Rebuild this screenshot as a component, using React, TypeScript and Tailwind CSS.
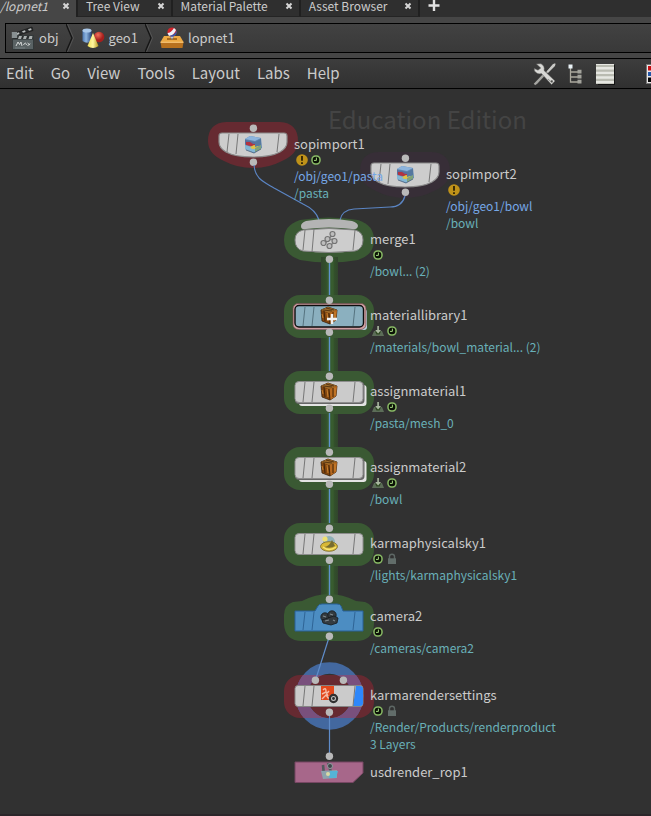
import React from "react";

type Badge = "warn" | "clock" | "import" | "lock";

/* ---------- toolbar and breadcrumb icons ---------- */

function CloseGlyph() {
  return (
    <svg viewBox="0 0 8 8" className="h-2 w-2" aria-hidden="true">
      <path d="M1.5 1.5 L6.5 6.5 M6.5 1.5 L1.5 6.5" stroke="#d6d6d6" strokeWidth="2" />
    </svg>
  );
}

function ClapperIcon() {
  return (
    <svg viewBox="0 0 24 24" className="h-6 w-6" aria-hidden="true">
      <path d="M1 8 L21 1 L22 4.5 L2 11 Z" fill="#2a2c2d" stroke="#141414" strokeWidth=".6" />
      <path d="M5 7.4 L8 6.3 L8.5 8 L6 9 Z M11 5.2 L14 4.2 L14.6 6 L12 6.8 Z M17 3.2 L20 2.2 L20.6 4 L18 4.8 Z" fill="#b9bdbd" />
      <rect x="1.5" y="9.5" width="21" height="14" fill="#596264" stroke="#33393a" />
      <rect x="2" y="10" width="20" height="3.5" fill="#2b2e2f" />
      <path d="M8 10 H11 L10 13 H7 Z M13 10 H16 L15 13 H12 Z M18.5 10 H21.5 L21 13 H17.5 Z" fill="#a9aeae" />
      <rect x="0.8" y="6" width="5.4" height="6" fill="#889092" />
      <path d="M5 20 L7 16 L8.5 18.5 L10 16 L11 20 M12.5 19 Q14.5 15 15.5 19 M16.5 17 L19 19 M16.5 20 L19 17.5" stroke="#d4d8d8" strokeWidth="1" fill="none" />
      <path d="M4 22 H14" stroke="#7f898b" strokeWidth=".8" />
    </svg>
  );
}

function GeoIcon() {
  return (
    <svg viewBox="0 0 24 22" className="h-[22px] w-6" aria-hidden="true">
      <defs>
        <linearGradient id="geoCyl">
          <stop offset="0" stopColor="#4d77b0" />
          <stop offset=".4" stopColor="#8db5e0" />
          <stop offset="1" stopColor="#27477d" />
        </linearGradient>
        <radialGradient id="geoBall" cx=".4" cy=".3">
          <stop offset="0" stopColor="#f2705a" />
          <stop offset="1" stopColor="#a51f1d" />
        </radialGradient>
        <linearGradient id="geoCone">
          <stop offset="0" stopColor="#f1df55" />
          <stop offset=".5" stopColor="#fff6a0" />
          <stop offset="1" stopColor="#b6951a" />
        </linearGradient>
      </defs>
      <path d="M1.5 3.5 V14 Q6 17.5 10.5 14 V3.5 Z" fill="url(#geoCyl)" />
      <ellipse cx="6" cy="3.5" rx="4.5" ry="2" fill="#a9c8ea" />
      <circle cx="18" cy="10" r="5.3" fill="url(#geoBall)" />
      <path d="M12 6 L17.5 19 Q12 23 6.5 19 Z" fill="url(#geoCone)" />
    </svg>
  );
}

function LopIcon() {
  return (
    <svg viewBox="0 0 24 22" className="h-[22px] w-6" aria-hidden="true">
      <path d="M4 9 H20 L23.5 15 H0.5 Z" fill="#eda944" />
      <path d="M0.5 15 H23.5 L22.5 21 H1.5 Z" fill="#b8711e" />
      <path d="M0.5 15.3 H23.5" stroke="#ffd182" strokeWidth="1" />
      <path d="M7 12 H17" stroke="#a86a1e" strokeWidth="2" />
      <path d="M9.5 8 L12 12.5 L14.5 8" fill="#d8e0ee" stroke="#6e7688" strokeWidth=".6" />
      <circle cx="12" cy="5" r="4.6" fill="#d2242a" />
      <path d="M7.5 6 Q11 6 14 1 L16 3 Q14 8.5 9 9 Z" fill="#edf2fb" />
      <path d="M9 9 Q15 8 16.5 3.5 Q17.5 9 12 9.8 Z" fill="#3158ad" />
    </svg>
  );
}

function ToolsIcon() {
  return (
    <svg viewBox="0 0 24 24" className="h-6 w-6" aria-hidden="true">
      <path d="M22 1.8 L12 12.5 L3 22" stroke="#8f8f8b" strokeWidth="1.6" />
      <path d="M22.5 1.5 L20 2 L13.5 9.5 L15 11 L22 4 Z" fill="#c9c9c6" />
      <path d="M11.5 12 L1.5 22.5" stroke="#a6a6a2" strokeWidth="2" />
      <path d="M3.5 2 L8 1.8 Q12 4 11 8.5 L22 19 L18.5 22.5 L8.5 11.5 Q4.5 13 1.5 9 L1.3 6.5 L5 8.2 L7.8 6 Z" fill="#d8d8d5" stroke="#6f6f6c" strokeWidth=".5" />
      <path d="M15 17 L20 21.5" stroke="#92928e" strokeWidth="1" />
      <circle cx="18.8" cy="19.3" r="1.1" fill="#4b4b49" />
    </svg>
  );
}

function TreeIcon() {
  return (
    <svg viewBox="0 0 16 20" className="h-5 w-4" aria-hidden="true">
      <path d="M3.5 4 V18 H11 M3.5 8 H11 M3.5 13 H11" stroke="#aaa89d" strokeWidth="1.3" fill="none" />
      <rect x="1.5" y="0.5" width="4" height="4" fill="#e9f2f6" />
      <path d="M10.5 5.8 h4 v3.8 h-4 Z M10.5 10.8 h4 v3.8 h-4 Z M10.5 15.8 h4 v3.8 h-4 Z" fill="#a3a39c" />
    </svg>
  );
}

function ListIcon() {
  return (
    <svg viewBox="0 0 20 22" className="h-[22px] w-5" aria-hidden="true">
      <path d="M3 2 H20 V22 H3 Z" fill="#151515" />
      <rect x="1" y="1" width="18" height="20" fill="#e6e7e2" />
      <path d="M1 3 H19 M1 7.6 H19 M1 12.2 H19 M1 16.8 H19" stroke="#b9bbb1" strokeWidth="2.2" />
      <path d="M1 20.5 H19" stroke="#c6c7bf" strokeWidth="1" />
    </svg>
  );
}

function PaletteIcon() {
  return (
    <svg viewBox="0 0 20 20" className="h-5 w-5 shrink-0" aria-hidden="true">
      <rect x="0.5" y="0.5" width="19" height="19" fill="#e8e8e8" stroke="#777" />
      <rect x="2" y="2" width="7" height="4.5" fill="#c40d12" />
      <rect x="2" y="8" width="7" height="4" fill="#2457a8" />
      <rect x="2" y="13.5" width="7" height="4.5" fill="#050505" />
      <rect x="11" y="2" width="7" height="16" fill="#999" />
    </svg>
  );
}

/* ---------- badges below a node's name ---------- */

function BadgeIcon({ kind }: { kind: Badge }) {
  return (
    <svg viewBox="0 0 14 14" className="h-3.5 w-3.5" aria-hidden="true">
      {kind === "warn" && (
        <>
          <circle cx="7" cy="7" r="5.8" fill="#bf9219" />
          <path d="M7 3 V7.8 M7 9.2 V11" stroke="#352805" strokeWidth="1.9" />
        </>
      )}
      {kind === "clock" && (
        <>
          <rect x="3" y="3" width="8" height="8" rx="3.4" fill="#0b1206" stroke="#8abb66" strokeWidth="1.5" />
          <path d="M7.4 4.6 V7.4 H5" stroke="#a5d880" strokeWidth="1" fill="none" />
        </>
      )}
      {kind === "import" && (
        <>
          <path d="M3 7 H11 L13 12 H1 Z" fill="#5c6d58" />
          <path d="M4 7.5 H10 L8.5 10.5 H5.5 Z" fill="#2f4a22" />
          <path d="M6.3 2 H7.9 V6 H10 L7.1 9.4 L4.2 6 H6.3 Z" fill="#a9b8a0" />
        </>
      )}
      {kind === "lock" && (
        <>
          <path d="M4.5 7 V4.5 Q4.5 2.3 7 2.3 Q9.5 2.3 9.5 4.5 V7" stroke="#5d6764" strokeWidth="1.4" fill="none" />
          <rect x="3" y="6.3" width="8" height="5.7" fill="#626d6a" />
        </>
      )}
    </svg>
  );
}

/* ---------- node artwork, drawn round the node's centre ---------- */

function At({ x, y, children }: { x: number; y: number; children: React.ReactNode }) {
  return <g transform={`translate(${x} ${y})`}>{children}</g>;
}

function Dot({ x = 0, y }: { x?: number; y: number }) {
  return <circle cx={x + 0.4} cy={y + 0.2} r="3.7" fill="#b9b9b9" />;
}

function Slashes({ color = "#777" }: { color?: string }) {
  return <path d="M-24 -10 L-26 10 M-15 -10 L-17 10 M26 -10 L24 10" stroke={color} strokeWidth="1" />;
}

function SopNode({ halo }: { halo: string }) {
  return (
    <>
      <path d="M-27 -22 H27 Q45 -21 45 -3 Q45 10 29 17 Q16 24 0 24 Q-16 24 -29 17 Q-45 10 -45 -3 Q-45 -21 -27 -22 Z" fill={halo} />
      <path d="M-31 -11 H31 Q34 -11 34 -8 V-2 Q34 4 27 8 Q18 13 0 13 Q-18 13 -27 8 Q-34 4 -34 -2 V-8 Q-34 -11 -31 -11 Z" fill="#cdcdcd" stroke="#8b8b8b" strokeWidth="1.2" />
      <path d="M-24 -10 L-26 8 M-15 -10 L-17 10 M26 -10 L24 8" stroke="#777" />
      <path d="M-8 -5 L-3 -8 L8 -6 L9 4 L1 9 L-8 5 Z" fill="#5f86ae" />
      <path d="M-8 -5 L-3 -8 L8 -6 L2 -3 Z" fill="#8db4dd" />
      <path d="M-8 -4 L2 -2 V2 L-8 0 Z" fill="#5a6f9c" />
      <path d="M-7 -2 L-3 -2 L0 0 L2 0 V3 L-7 1 Z" fill="#b33340" />
      <path d="M-8 1 L2 4 V9 L-8 5 Z" fill="#83b6d4" />
      <path d="M-3 3 L1 1 L6 2 L4 5 L-1 5 Z" fill="#dcc34a" />
      <path d="M2 -2 L8 -5 V1 L2 3 Z" fill="#55789f" />
      <path d="M2 4 L8 1 V5 L2 8 Z" fill="#7fa37c" />
      <path d="M-7 6 L1 9 L8 5" stroke="#46617f" fill="none" strokeWidth=".8" />
      <Dot y={-16} />
      <Dot y={18} />
    </>
  );
}

function GreenHalo() {
  return <rect x="-45" y="-21" width="90" height="43" rx="16" fill="#3a5933" />;
}

function WoodCube() {
  return (
    <>
      <path d="M-8 -6 L-1 -9 L8 -6 L7 4 L1 8 L-7 5 Z" fill="#84470f" stroke="#3a230e" strokeWidth=".8" />
      <path d="M-8 -6 L-1 -9 L8 -6 L0 -3 Z" fill="#a06c2a" />
      <path d="M0 -3 L8 -6 L7 4 L1 8 Z" fill="#b5681f" />
      <path d="M-5 -5 L-4 5 M0 -3 L1 8 M4 -4 V5" stroke="#3f240b" strokeWidth="1" />
      <path d="M-2 -3 L-1 5 M6 -4 V3 M-7 -2 L-6 2" stroke="#c98230" strokeWidth="1" />
      <path d="M-6 -6 L3 -5 M-3 -8 L5 -6" stroke="#46290e" strokeWidth=".8" />
    </>
  );
}

function AssignNode() {
  return (
    <>
      <GreenHalo />
      <rect x="-30" y="-7" width="67.5" height="21" rx="3" fill="#e4e4e4" />
      <rect x="-34" y="-10" width="69.5" height="22" rx="4" fill="#666" />
      <rect x="-34" y="-10.5" width="68" height="21" rx="4" fill="#cbcbcb" stroke="#8d8d8d" />
      <Slashes />
      <WoodCube />
      <Dot y={-16} />
      <Dot y={16} />
    </>
  );
}

function Graph() {
  return (
    <svg className="absolute inset-0 h-full w-full" role="img" aria-label="Node network">
      <defs>
        <linearGradient id="trail">
          <stop offset="0" stopColor="#31452c" />
          <stop offset=".3" stopColor="#324f2b" />
          <stop offset=".4" stopColor="#385c2f" />
          <stop offset=".7" stopColor="#385c2f" />
          <stop offset=".8" stopColor="#324f2b" />
          <stop offset="1" stopColor="#31452c" />
        </linearGradient>
        <clipPath id="flagHalo">
          <rect x="-45" y="-21" width="90" height="43" rx="16" />
        </clipPath>
      </defs>

      <At x={253} y={55}><SopNode halo="#662a31" /></At>
      <At x={405} y={85}><SopNode halo="#372e37" /></At>

      {/* green halos behind the cooked chain */}
      <path d="M300 131 Q329 126 358 131 Q374 136 374 151 Q374 166 358 171 Q329 176 300 171 Q284 166 284 151 Q284 136 300 131 Z" fill="#3a5933" />
      <rect x="321" y="168" width="17" height="345" fill="url(#trail)" />

      <path d="M254 76 C255 90 264 93 274 99 L303 115 Q316 121 319 131" fill="none" stroke="#5b85c4" strokeWidth="1.2" />
      <path d="M405 107 Q402 118 390 118 L354 120 Q342 121 340 131" fill="none" stroke="#5b85c4" strokeWidth="1.2" />

      <At x={329} y={151}>
        <path d="M-23 -19 Q0 -23 23 -19 Q29 -17 29 -14 Q28 -10 23 -11 Q0 -14 -23 -11 Q-28 -10 -28 -14 Q-28 -17 -23 -19 Z" fill="#b4b4b4" />
        <path d="M-26 -10 Q0 -13 26 -10 Q34 -8 34 0 Q34 9 26 11 Q0 14 -26 11 Q-34 9 -34 0 Q-34 -8 -26 -10 Z" fill="#cdcdcd" stroke="#838383" />
        <path d="M-24 -10 L-26 10 M-15 -11 L-17 12 M26 -10 L24 10" stroke="#777" />
        <path d="M-5 5 L3 -5 M0 7 L6 1 M-2 0 L5 -1" stroke="#858585" strokeWidth="1.5" />
        <path d="M-8 3 a2.5 2.5 0 1 0 5 0 a2.5 2.5 0 1 0 -5 0 M-2 6 a2.5 2.5 0 1 0 5 0 a2.5 2.5 0 1 0 -5 0 M-4 -1 a2.5 2.5 0 1 0 5 0 a2.5 2.5 0 1 0 -5 0 M1 -6 a2.5 2.5 0 1 0 5 0 a2.5 2.5 0 1 0 -5 0 M3 1 a2.5 2.5 0 1 0 5 0 a2.5 2.5 0 1 0 -5 0" fill="#bdbdbd" stroke="#747474" strokeWidth="1.2" />
        <Dot y={19} />
      </At>

      <At x={329} y={227}>
        <GreenHalo />
        <rect x="-31" y="-7" width="69" height="21" rx="3" fill="#b8d3df" />
        <rect x="-36" y="-12.5" width="73" height="26" rx="5" fill="#cf9fa1" stroke="#6d4a4c" strokeWidth=".7" />
        <rect x="-34" y="-10.5" width="68.5" height="21.5" rx="4" fill="#8bb0bf" stroke="#0e0e0e" strokeWidth="1.4" />
        <path d="M-24 -9 L-26 10 M-15 -9 L-17 10 M26 -9 L24 10" stroke="#55737f" />
        <WoodCube />
        <path d="M3 -2 V8 M-2 3 H8" stroke="#f1f1f1" strokeWidth="2.4" />
        <Dot y={-16} />
        <Dot y={16} />
      </At>

      <At x={329} y={303}><AssignNode /></At>
      <At x={329} y={379}><AssignNode /></At>

      <At x={329} y={455}>
        <GreenHalo />
        <rect x="-34" y="-10.5" width="68" height="21" rx="4" fill="#cbcbcb" stroke="#8d8d8d" />
        <Slashes />
        <ellipse cx="0" cy="-2" rx="6" ry="6" fill="#8fb0b6" />
        <circle cx="-4" cy="-5" r="2.6" fill="#efe072" />
        <ellipse cx="0" cy="2.5" rx="8.5" ry="4.8" fill="#d8b836" stroke="#817333" strokeWidth=".9" />
        <path d="M-5 3 Q0 3 3 -4 L6 2 Q2 5 -5 3 Z" fill="#776c30" />
        <path d="M-6 3 Q0 8 7 3" stroke="#f7e574" fill="none" strokeWidth="1.3" />
        <Dot y={-16} />
        <Dot y={16} />
      </At>

      <At x={329} y={531}>
        <path d="M-27 -19 Q0 -33 27 -19 L36 -18 Q45 -15 45 -5 V4 Q44 21 27 21 H-27 Q-44 21 -45 4 V-5 Q-45 -15 -36 -18 Z" fill="#3a5933" />
        <path d="M-34 -9 H-14 L-11 -14 Q-10 -16 -7 -16 H8 Q11 -16 12 -14 L14 -9 H34 V11 H-34 Z" fill="#4c8dc2" stroke="#286099" strokeLinejoin="round" />
        <path d="M-24 -8 L-26 10 M-15 -8 L-17 10 M26 -8 L24 10" stroke="#2e6496" />
        <g fill="#343b40" stroke="#171b1d" strokeWidth=".8">
          <circle cx="-4" cy="-3" r="4.2" />
          <circle cx="3" cy="-5" r="4.2" />
          <path d="M-7 0 L5 -4 L9 -2 L8 3 L2 5 L-6 3 Z" />
        </g>
        <path d="M-6 -4 L-3 -3 M1 -6 L4 -5 M-4 1 L0 0 M4 0 L6 1" stroke="#7f898e" strokeWidth="1.1" fill="none" />
      </At>

      {/* flagged render settings node */}
      <At x={329} y={607}>
        <rect x="-45" y="-21" width="90" height="43" rx="16" fill="#662a31" />
        <circle cx="0.5" cy="0" r="28" fill="none" stroke="#43689f" strokeWidth="11.5" />
        <circle cx="0.5" cy="0" r="28" fill="none" stroke="#79507d" strokeWidth="11.5" clipPath="url(#flagHalo)" />
        <path d="M0.5 -60 L-13.5 -16 M0.5 16 V60" stroke="#5f8cc9" strokeWidth="1.2" />
        <rect x="-34" y="-10.5" width="68" height="21" rx="3" fill="#cbcbcb" stroke="#858585" />
        <path d="M27 -10 H31 Q34 -10 34 -7 V7 Q34 10 31 10 H24 Z" fill="#2d87fa" />
        <Slashes />
        <rect x="-8" y="-10" width="13" height="14" fill="#e2481c" />
        <path d="M-6 -6 Q-3 -9 -3 -5 T0 -5 M-7 -2 L-3 -4 L-1 0 M-7 3 L-3 -1 L0 3" fill="none" stroke="#f6bba5" strokeWidth="1.4" />
        <circle cx="4.5" cy="2.5" r="3.6" fill="#c4c4c4" stroke="#303030" strokeWidth="2.2" />
        <circle cx="4.5" cy="2.5" r="1.4" fill="#303030" />
        <Dot x={-14} y={-16} />
        <Dot x={14} y={-16} />
        <Dot y={16} />
      </At>

      <At x={329} y={683}>
        <path d="M-34 -10 H34 V1 L24 10.5 H-34 Z" fill="#a7678a" stroke="#774763" />
        <path d="M-6 -7 L-5 3 M-1 -9 L2 0" stroke="#52595e" strokeWidth="2.6" />
        <circle cx="1" cy="-6" r="2.5" fill="#40474b" stroke="#929b9f" />
        <path d="M-8 -1 L8 -2 V6 L-6 7 Z" fill="#8da3ad" />
        <path d="M1 -1 H9 L7 6 H0 Z" fill="#55b4d7" />
        <circle cx="-1" cy="2" r="2" fill="#dadba5" />
        <Dot y={-16} />
      </At>

      {/* thin data wires of the chain */}
      <path d="M329.5 174 V206 M329.5 248 V282 M329.5 324 V358 M329.5 400 V434 M329.5 476 V506" stroke="#5f92cc" strokeWidth="1.4" />
      <Dot x={329} y={510} />
      <Dot x={329} y={547} />
    </svg>
  );
}

/* ---------- node names and their info lines ---------- */

const LABELS: { name: string; at: string; badges: Badge[]; lines: { text: string; link?: boolean }[] }[] = [
  { name: "sopimport1", at: "left-[294px] top-[46px]", badges: ["warn", "clock"], lines: [{ text: "/obj/geo1/pasta", link: true }, { text: "/pasta" }] },
  { name: "sopimport2", at: "left-[446px] top-[76px]", badges: ["warn"], lines: [{ text: "/obj/geo1/bowl", link: true }, { text: "/bowl" }] },
  { name: "merge1", at: "left-[370px] top-[141px]", badges: ["clock"], lines: [{ text: "/bowl... (2)" }] },
  { name: "materiallibrary1", at: "left-[370px] top-[217px]", badges: ["import", "clock"], lines: [{ text: "/materials/bowl_material... (2)" }] },
  { name: "assignmaterial1", at: "left-[370px] top-[293px]", badges: ["import", "clock"], lines: [{ text: "/pasta/mesh_0" }] },
  { name: "assignmaterial2", at: "left-[370px] top-[369px]", badges: ["import", "clock"], lines: [{ text: "/bowl" }] },
  { name: "karmaphysicalsky1", at: "left-[370px] top-[445px]", badges: ["clock", "lock"], lines: [{ text: "/lights/karmaphysicalsky1" }] },
  { name: "camera2", at: "left-[370px] top-[518px]", badges: ["clock"], lines: [{ text: "/cameras/camera2" }] },
  { name: "karmarendersettings", at: "left-[370px] top-[597px]", badges: ["clock", "lock"], lines: [{ text: "/Render/Products/renderproduct" }, { text: "3 Layers" }] },
  { name: "usdrender_rop1", at: "left-[370px] top-[674px]", badges: [], lines: [] },
];

const TABS = ["Tree View", "Material Palette", "Asset Browser"];
const MENUS = ["Edit", "Go", "View", "Tools", "Layout", "Labs", "Help"];

function Chevron() {
  return (
    <svg viewBox="0 0 8 28" className="h-7 w-2 shrink-0" aria-hidden="true">
      <path d="M0 0 L6 14 L0 28" fill="none" stroke="#161616" strokeWidth="1.4" />
      <path d="M1.5 0 L7.5 14 L1.5 28" fill="none" stroke="#5a5a5a" strokeWidth=".8" />
    </svg>
  );
}

export default function App() {
  return (
    <div className="flex min-h-screen flex-col bg-[#2b262a] font-['Noto_Sans_CJK_SC','Noto_Sans',sans-serif] text-[#cbcbcb]">
      <div className="flex h-[17px] items-stretch bg-[#2f2f2f] text-[12px] leading-3">
        <div className="flex w-[78px] shrink-0 justify-between border-r-2 border-[#202020] bg-[#464646] pr-1.5">
          <button className="h-3 italic leading-3">/lopnet1</button>
          <button aria-label="Close lopnet1" className="h-3 w-2"><CloseGlyph /></button>
        </div>
        {TABS.map((t) => (
          <div key={t} className="flex shrink-0 gap-[17px] border-b border-r-2 border-b-[#242424] border-r-[#202020] pl-2 pr-1.5">
            <button className="h-3 leading-3">{t}</button>
            <button aria-label={`Close ${t}`} className="h-3 w-2"><CloseGlyph /></button>
          </div>
        ))}
        <button aria-label="Add tab" className="ml-2 h-3">
          <svg viewBox="0 0 12 12" className="h-3 w-3"><path d="M6 0 V11 M0.5 5.5 H11.5" stroke="#e2e2e2" strokeWidth="2.4" /></svg>
        </button>
      </div>

      <div className="bg-[#464646] pb-[5px] pl-[5px] pt-1.5">
        <nav aria-label="Network path" className="flex h-[30px] items-center border-y border-l border-black bg-linear-to-b from-[#424242] to-[#393939] text-[13px]">
          <button className="flex items-center gap-1 pl-[5px] pr-[7px]"><ClapperIcon />obj</button>
          <Chevron />
          <button className="flex items-center gap-1 pl-[7px] pr-[7px]"><GeoIcon />geo1</button>
          <Chevron />
          <button className="flex items-center gap-1 pl-[7px]"><LopIcon />lopnet1</button>
        </nav>
      </div>

      <div className="flex h-[31px] items-center justify-between overflow-hidden border-y border-black bg-linear-to-b from-[#3d3d3d] to-[#303030]">
        <div className="flex text-[15px]">
          {MENUS.map((m) => (
            <button key={m} className="pl-1.5 pr-[11px]">{m}</button>
          ))}
        </div>
        <div className="-mr-[15px] flex items-center">
          <button aria-label="Tools" className="mr-2.5"><ToolsIcon /></button>
          <button aria-label="Tree" className="mr-3"><TreeIcon /></button>
          <button aria-label="List" className="mr-[31px]"><ListIcon /></button>
          <button aria-label="Colors"><PaletteIcon /></button>
        </div>
      </div>

      <main className="relative mb-0.5 min-h-[720px] flex-1 overflow-hidden bg-[#313131]">
        <div className="absolute left-[328px] top-3 text-[24px] leading-9 text-[#444]">Education Edition</div>
        <Graph />
        {LABELS.map((l) => (
          <div key={l.name} className={`absolute whitespace-nowrap ${l.at}`}>
            <div className="text-[13px] leading-[18px]">{l.name}</div>
            <div className="flex pl-px">
              {l.badges.map((b) => <BadgeIcon key={b} kind={b} />)}
            </div>
            {l.lines.map((s) => (
              <div key={s.text} className={`text-[12px] leading-[17px] ${s.link ? "text-[#76a7e6]" : "text-[#69b0b8]"}`}>{s.text}</div>
            ))}
          </div>
        ))}
      </main>
    </div>
  );
}
